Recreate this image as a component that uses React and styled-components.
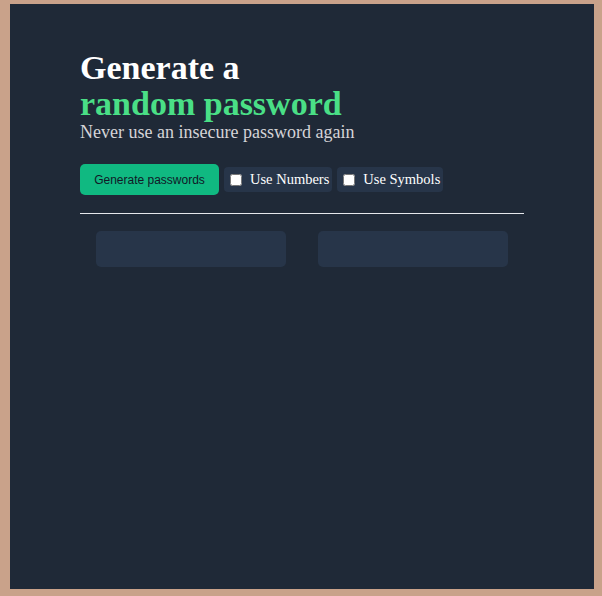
import React, { useState } from "react";
import styled, { createGlobalStyle } from "styled-components";

const GlobalStyle = createGlobalStyle`
  html, body {
    margin: 0;
    background: #c9a28a;
  }
  body {
    padding: 4px 8px 7px 10px;
    font-family: "Liberation Serif", "Times New Roman", serif;
  }
`;

const Panel = styled.main`
  background: #1f2937;
  height: 585px;
  box-sizing: border-box;
  padding: 46px 70px 0;
`;

const Title = styled.h1`
  margin: 0;
  font-size: 34px;
  line-height: 36px;
  font-weight: 700;
  color: #ffffff;
`;

const Accent = styled.span`
  display: block;
  color: #4adf86;
`;

const Subtitle = styled.p`
  margin: 0;
  font-size: 18px;
  line-height: 21px;
  color: #d5d4d8;
`;

const Toolbar = styled.div`
  display: flex;
  align-items: center;
  gap: 5px;
  margin-top: 21px;
`;

const Button = styled.button`
  border: none;
  background: #10b981;
  color: #111827;
  font-family: "Liberation Sans", Arial, sans-serif;
  font-size: 12px;
  width: 139px;
  height: 31px;
  border-radius: 5px;
  cursor: pointer;
`;

const Option = styled.label`
  display: flex;
  align-items: center;
  gap: 4px;
  height: 25px;
  padding: 0 3px 0 6px;
  background: #273549;
  border-radius: 4px;
  color: #ffffff;
  font-size: 14.5px;
  input {
    margin: 0 4px 0 0;
    width: 12px;
    height: 12px;
  }
`;

const Divider = styled.hr`
  border: none;
  border-top: 1px solid #e5e7eb;
  margin: 18px 0 17px;
`;

const Results = styled.div`
  display: flex;
  justify-content: space-around;
`;

const Slot = styled.div`
  width: 190px;
  height: 36px;
  background: #273549;
  border-radius: 5px;
`;

export default function App() {
  const [numbers, setNumbers] = useState(false);
  const [symbols, setSymbols] = useState(false);
  return (
    <>
      <GlobalStyle />
      <Panel>
        <Title>
          Generate a
          <Accent>random password</Accent>
        </Title>
        <Subtitle>Never use an insecure password again</Subtitle>
        <Toolbar>
          <Button>Generate passwords</Button>
          <Option>
            <input type="checkbox" checked={numbers} onChange={() => setNumbers(!numbers)} />
            Use Numbers
          </Option>
          <Option>
            <input type="checkbox" checked={symbols} onChange={() => setSymbols(!symbols)} />
            Use Symbols
          </Option>
        </Toolbar>
        <Divider />
        <Results>
          <Slot />
          <Slot />
        </Results>
      </Panel>
    </>
  );
}
